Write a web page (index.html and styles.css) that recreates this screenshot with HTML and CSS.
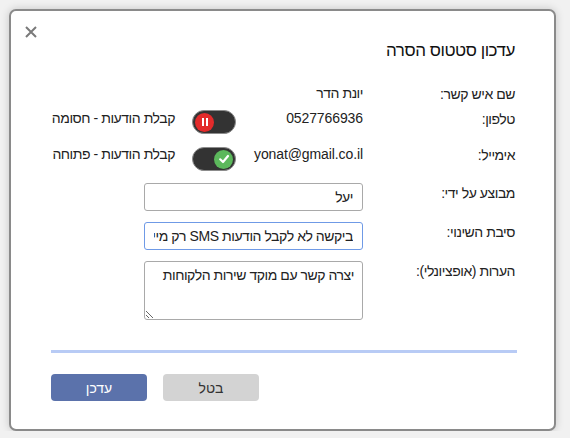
FILE: index.html
```html
<!DOCTYPE html>
<html lang="he" dir="rtl">
<head>
  <meta charset="UTF-8" />
  <meta name="viewport" content="width=device-width, initial-scale=1.0"/>
  <title>עדכון סטטוס הסרה</title>
  <link rel="stylesheet" href="styles.css">
</head>
<body>

  <div class="dialog">
    <button class="close-btn" aria-label="סגור">
      <svg width="12" height="12" viewBox="0 0 12 12">
        <path d="M1 1 L11 11 M11 1 L1 11" stroke="#7a7a7a" stroke-width="2" fill="none"/>
      </svg>
    </button>

    <h2 class="dialog-title">עדכון סטטוס הסרה</h2>

    <div class="info-row name-row">
      <span class="label">שם איש קשר:</span>
      <span class="value">יונת הדר</span>
    </div>

    <div class="info-row phone-row">
      <span class="label">טלפון:</span>
      <span class="value latin">0527766936</span>
      <span class="toggle blocked">
        <span class="knob">
          <svg width="10" height="10" viewBox="0 0 10 10">
            <rect x="2" y="1" width="2" height="8" fill="#fff"/>
            <rect x="6" y="1" width="2" height="8" fill="#fff"/>
          </svg>
        </span>
      </span>
      <span class="toggle-text">קבלת הודעות - חסומה</span>
    </div>

    <div class="info-row email-row">
      <span class="label">אימייל:</span>
      <span class="value latin">yonat@gmail.co.il</span>
      <span class="toggle open">
        <span class="knob">
          <svg width="12" height="12" viewBox="0 0 12 12">
            <path d="M2.2 6.3 L5 9 L10 3" stroke="#fff" stroke-width="2.2" fill="none" stroke-linecap="round" stroke-linejoin="round"/>
          </svg>
        </span>
      </span>
      <span class="toggle-text">קבלת הודעות - פתוחה</span>
    </div>

    <div class="form-row">
      <label class="label" for="doneBy">מבוצע על ידי:</label>
      <input type="text" id="doneBy" value="יעל"/>
    </div>

    <div class="form-row">
      <label class="label" for="reason">סיבת השינוי:</label>
      <input type="text" id="reason" class="focused" value="ביקשה לא לקבל הודעות SMS רק מייל"/>
    </div>

    <div class="form-row">
      <label class="label" for="notes">הערות (אופציונלי):</label>
      <textarea id="notes">יצרה קשר עם מוקד שירות הלקוחות</textarea>
    </div>

    <div class="divider"></div>

    <div class="dialog-buttons">
      <button class="btn cancel-btn">בטל</button>
      <button class="btn update-btn">עדכן</button>
    </div>
  </div>

</body>
</html>
```

FILE: styles.css
```css
body {
  font-family: "Liberation Sans", "Open Sans", Arial, sans-serif;
  font-size: 14px;
  letter-spacing: -0.45px;
  background-color: #f1f1f1;
  margin: 0;
  color: #222;
}

.dialog {
  position: relative;
  box-sizing: border-box;
  width: 547px;
  height: 422px;
  margin: 9px 14px 0 9px;
  padding: 29px 39px 0 40px;
  background-color: white;
  border: 2px solid #8a8a8a;
  border-radius: 7px;
  box-shadow: 0 0 8px rgba(0, 0, 0, 0.18);
}

.close-btn {
  position: absolute;
  top: 15px;
  left: 14px;
  width: 12px;
  height: 12px;
  padding: 0;
  border: none;
  background: none;
  cursor: pointer;
}

.close-btn svg {
  display: block;
}

.dialog-title {
  margin: 0 0 22px 0;
  font-size: 17px;
  font-weight: normal;
  line-height: 22px;
  color: #111;
}

.info-row,
.form-row {
  display: flex;
  align-items: flex-start;
  white-space: nowrap;
}

.label {
  width: 152px;
  flex-shrink: 0;
  color: #222;
}

.info-row .label {
  padding-top: 1px;
  line-height: 18px;
}

.value {
  width: 127px;
  flex-shrink: 0;
  line-height: 18px;
}

.latin {
  letter-spacing: -0.1px;
}

.name-row {
  margin-bottom: 6px;
}

.phone-row {
  margin-bottom: 11px;
}

.email-row {
  margin-bottom: 12px;
}

.toggle {
  box-sizing: border-box;
  display: flex;
  align-items: center;
  flex-shrink: 0;
  width: 44px;
  height: 24px;
  padding: 0 2px;
  background-color: #333;
  border: 1px solid #8c8c8c;
  border-radius: 12px;
  margin-top: 1px;
}

.email-row .toggle {
  margin-top: 2px;
}

.toggle.blocked {
  justify-content: flex-end;
}

.toggle.open {
  justify-content: flex-start;
}

.knob {
  width: 19px;
  height: 19px;
  border-radius: 50%;
  display: flex;
  align-items: center;
  justify-content: center;
}

.blocked .knob {
  background-color: #e32b2b;
}

.open .knob {
  background-color: #5cb85c;
}

.toggle-text {
  margin-right: 17px;
  line-height: 18px;
}

.form-row {
  margin-bottom: 11px;
}

.form-row .label {
  line-height: 20px;
}

input[type="text"],
textarea {
  box-sizing: border-box;
  width: 219px;
  font-family: "Liberation Sans", "Open Sans", Arial, sans-serif;
  font-size: 14px;
  letter-spacing: -0.45px;
  color: #222;
  border: 1px solid #a9a9a9;
  border-radius: 3px;
  background-color: white;
  outline: none;
}

input[type="text"] {
  height: 28px;
  padding: 0 9px;
}

input.focused {
  border-color: #6f9ae6;
}

textarea {
  height: 59px;
  padding: 5px 8px;
  resize: both;
}

.divider {
  height: 3px;
  margin: 30px -2px 21px 0;
  background-color: #b8cbf5;
}

.dialog-buttons {
  display: flex;
  justify-content: flex-end;
  gap: 16px;
}

.btn {
  width: 96px;
  height: 27px;
  border: none;
  border-radius: 4px;
  font-family: "Liberation Sans", "Open Sans", Arial, sans-serif;
  font-size: 14px;
  cursor: pointer;
}

.update-btn {
  background-color: #5b72ab;
  color: white;
}

.cancel-btn {
  background-color: #d3d3d3;
  color: #333;
}
```
